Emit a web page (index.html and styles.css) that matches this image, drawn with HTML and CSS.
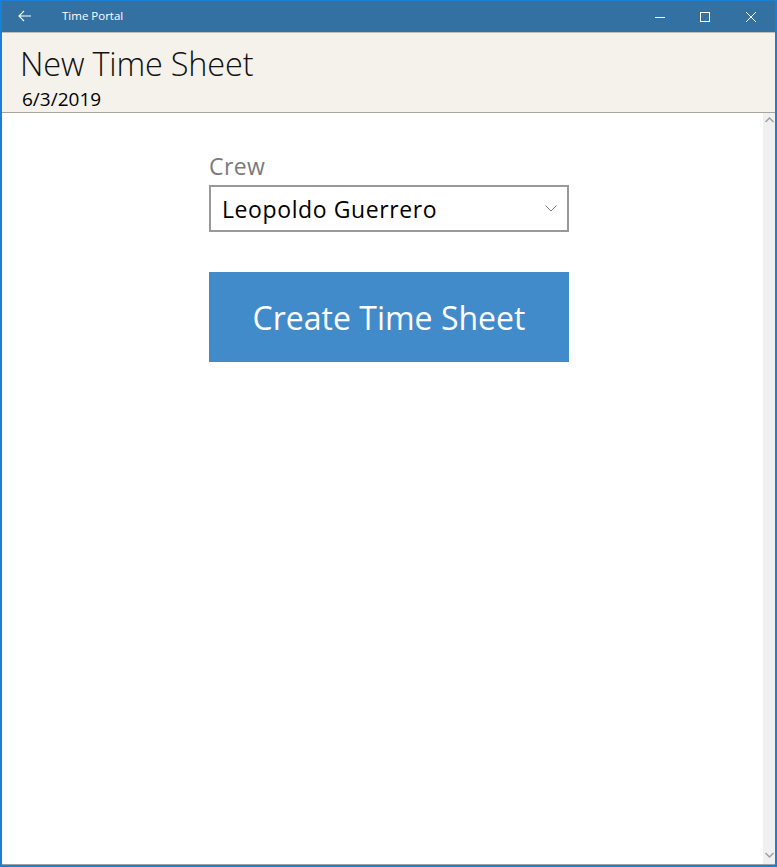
FILE: index.html
```html
<!DOCTYPE html>
<html>
<head>
<meta charset="utf-8">
<link rel="stylesheet" href="styles.css">
</head>
<body>
<div class="window">
  <div class="titlebar">
    <div class="back">
      <svg width="14" height="12" viewBox="0 0 14 12"><path d="M6 1 L1 6 L6 11 M1 6 H13" fill="none" stroke="#fff" stroke-width="1.1"/></svg>
    </div>
    <div class="apptitle">Time Portal</div>
    <div class="controls">
      <div class="ctl"><svg width="12" height="12" viewBox="0 0 12 12"><path d="M1 6.5 H11" stroke="#fff" stroke-width="1"/></svg></div>
      <div class="ctl"><svg width="12" height="12" viewBox="0 0 12 12"><rect x="1.5" y="1.5" width="9" height="9" fill="none" stroke="#fff" stroke-width="1"/></svg></div>
      <div class="ctl"><svg width="12" height="12" viewBox="0 0 12 12"><path d="M1 1 L11 11 M11 1 L1 11" stroke="#fff" stroke-width="1"/></svg></div>
    </div>
  </div>
  <div class="header">
    <div class="pagetitle">New Time Sheet</div>
    <div class="date">6/3/2019</div>
  </div>
  <div class="content">
    <div class="main">
      <div class="form">
        <div class="label">Crew</div>
        <div class="combo">
          <span class="combo-text">Leopoldo Guerrero</span>
          <svg class="chev" width="12" height="7" viewBox="0 0 12 7"><path d="M0.5 0.5 L6 6 L11.5 0.5" fill="none" stroke="#777" stroke-width="1"/></svg>
        </div>
        <div class="button">Create Time Sheet</div>
      </div>
    </div>
    <div class="scrollbar">
      <svg class="arrow" width="9" height="6" viewBox="0 0 9 6"><path d="M0.5 5 L4.5 1 L8.5 5" fill="none" stroke="#a0a0a0" stroke-width="1.5"/></svg>
      <svg class="arrow" width="9" height="6" viewBox="0 0 9 6"><path d="M0.5 1 L4.5 5 L8.5 1" fill="none" stroke="#a0a0a0" stroke-width="1.5"/></svg>
    </div>
  </div>
</div>
</body>
</html>
```
FILE: styles.css
```css
html, body {
  margin: 0;
  padding: 0;
  background: #ffffff;
}
.window {
  width: 777px;
  height: 867px;
  box-sizing: border-box;
  border-top: 1px solid #1a7fd6;
  border-left: 2px solid #1a7fd6;
  border-right: 2px solid #1a7fd6;
  border-bottom: 2px solid #1a7fd6;
  display: flex;
  flex-direction: column;
  font-family: "Open Sans", "Noto Sans", sans-serif;
}
.titlebar {
  height: 31px;
  background: #3371a3;
  display: flex;
  align-items: center;
  color: #fff;
  flex: none;
}
.back {
  width: 46px;
  display: flex;
  justify-content: center;
  padding-left: 4px;
  box-sizing: border-box;
}
.back svg { display: block; margin-left: -4px; margin-top: -2px; }
.apptitle {
  font-size: 11.5px;
  margin-left: 14px;
  margin-top: -2px;
  flex: 1;
}
.controls {
  display: flex;
  height: 31px;
}
.ctl {
  width: 45px;
  display: flex;
  align-items: center;
  justify-content: center;
}
.ctl:last-child { width: 48px; }
.ctl svg { display: block; }
.header {
  flex: none;
  height: 79px;
  background: #f5f2eb;
  border-top: 1px solid #c2beb6;
  border-bottom: 1px solid #a9a59e;
  padding-left: 18px;
  box-sizing: content-box;
}
.pagetitle {
  font-size: 32.5px;
  font-weight: 300;
  color: #111;
  line-height: 40px;
  margin-top: 11px;
  letter-spacing: -0.2px;
}
.date {
  font-size: 19px;
  color: #000;
  line-height: 24px;
  margin-left: 2px;
  margin-top: 3px;
}
.content {
  flex: 1;
  display: flex;
  border-bottom: 1px solid #a0a0a0;
}
.main {
  flex: 1;
}
.form {
  margin-left: 207px;
  width: 360px;
  padding-top: 38px;
}
.label {
  font-size: 23px;
  color: #7a7a7a;
  line-height: 30px;
  margin-bottom: 4px;
  letter-spacing: 0.4px;
}
.combo {
  height: 47px;
  box-sizing: border-box;
  border: 2px solid #999999;
  display: flex;
  align-items: center;
  padding-left: 11px;
  padding-right: 10px;
}
.combo-text {
  flex: 1;
  font-size: 23px;
  color: #000;
  letter-spacing: 0.6px;
}
.chev { display: block; }
.button {
  margin-top: 40px;
  height: 90px;
  background: #428bca;
  color: #fff;
  font-size: 32px;
  display: flex;
  align-items: center;
  justify-content: center;
}
.scrollbar {
  width: 12px;
  background: #f0f0f0;
  display: flex;
  flex-direction: column;
  justify-content: space-between;
  align-items: center;
  padding: 4px 0 6px;
}
.arrow { display: block; }
```
